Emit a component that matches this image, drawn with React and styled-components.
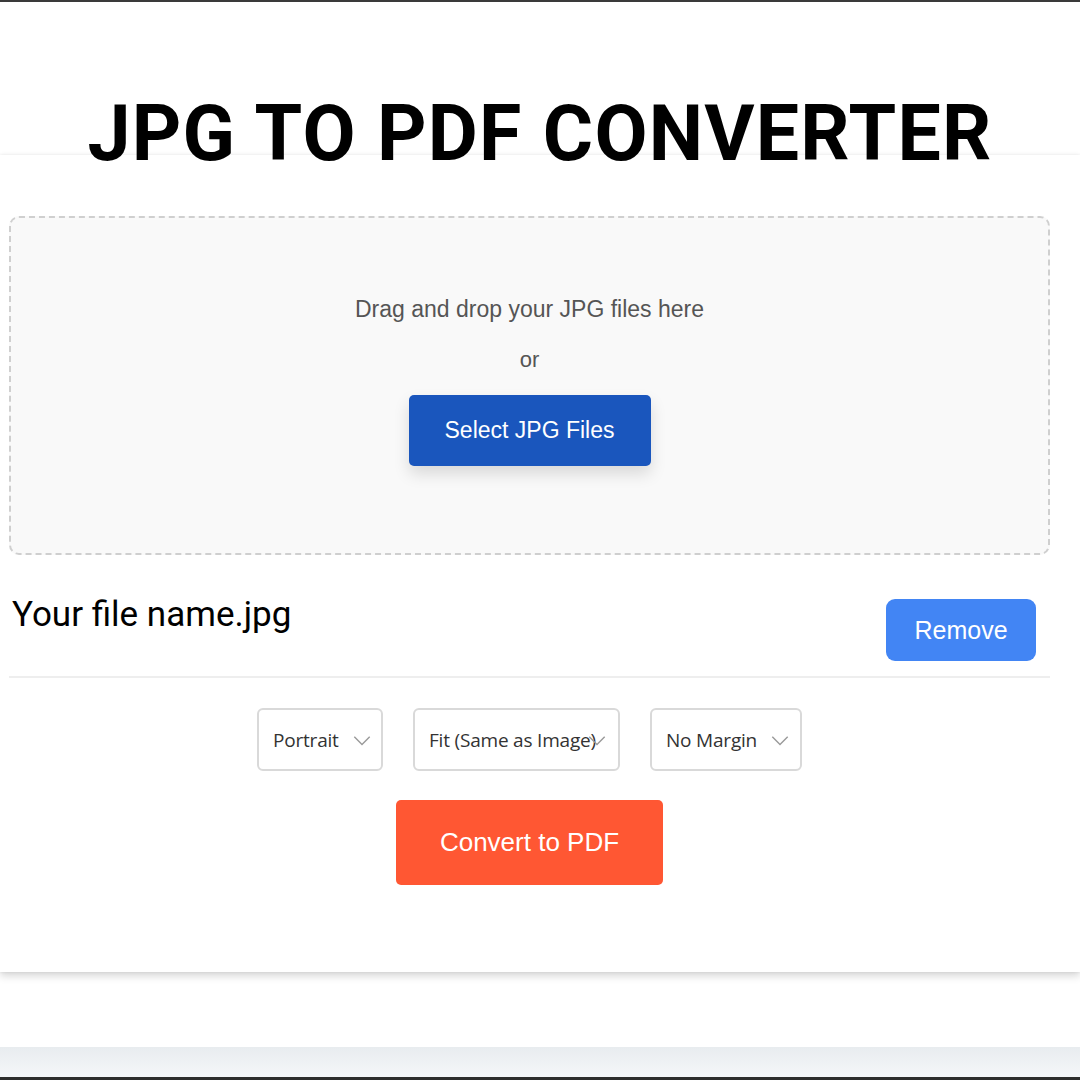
import React from 'react';
import styled, { createGlobalStyle } from 'styled-components';

const GlobalStyle = createGlobalStyle`
  html, body {
    margin: 0;
    padding: 0;
    background: #ffffff;
  }
  * {
    box-sizing: border-box;
  }
`;

const Page = styled.div`
  width: 1080px;
  height: 1080px;
  overflow: hidden;
  display: flex;
  flex-direction: column;
  border-top: 2px solid #3a3a3a;
  border-bottom: 3px solid #2e2e2e;
  background: #ffffff;
`;

const Title = styled.h1`
  position: relative;
  z-index: 1;
  margin: 95px 0 -17px;
  height: 75px;
  text-align: center;
  font-family: Roboto, "Liberation Sans", sans-serif;
  font-weight: 700;
  font-size: 77px;
  line-height: 75px;
  color: #000;
  letter-spacing: 1.2px;
`;

const Card = styled.div`
  position: relative;
  background: #ffffff;
  padding: 61px 30px 0 9px;
  height: 817px;
  box-shadow: 0 0 3px rgba(0, 0, 0, 0.08), 0 4px 8px rgba(0, 0, 0, 0.16);
`;

const DropZone = styled.div`
  height: 339px;
  border: 2px dashed #cfcfcf;
  border-radius: 10px;
  background: #f9f9f9;
  display: flex;
  flex-direction: column;
  align-items: center;
  padding-top: 77px;
  font-family: "Liberation Sans", Arial, sans-serif;
  color: #555;
`;

const DropText = styled.p`
  margin: 0;
  font-size: 23px;
  line-height: 28px;
`;

const OrText = styled.p`
  margin: 23px 0 0;
  font-size: 22px;
  line-height: 28px;
`;

const SelectButton = styled.button`
  margin-top: 21px;
  width: 242px;
  height: 71px;
  border: none;
  border-radius: 5px;
  background: #1a56bd;
  color: #fff;
  font-family: "Liberation Sans", Arial, sans-serif;
  font-size: 23px;
  box-shadow: 0 8px 16px rgba(0, 0, 0, 0.13);
`;

const FileRow = styled.div`
  display: flex;
  justify-content: space-between;
  align-items: flex-start;
  padding: 36px 14px 15px 3px;
  border-bottom: 2px solid #eeeeee;
`;

const FileName = styled.span`
  font-family: Roboto, "Liberation Sans", sans-serif;
  font-size: 35px;
  line-height: 40px;
  color: #000;
  margin-top: 4px;
`;

const RemoveButton = styled.button`
  margin-top: 8px;
  width: 150px;
  height: 62px;
  border: none;
  border-radius: 9px;
  background: #4285f4;
  color: #fff;
  font-family: "Liberation Sans", Arial, sans-serif;
  font-size: 25px;
`;

const Options = styled.div`
  display: flex;
  justify-content: center;
  gap: 30px;
  padding-top: 30px;
`;

const Select = styled.div`
  width: ${p => p.$w}px;
  height: 63px;
  border: 2px solid #d9d9d9;
  border-radius: 6px;
  background: #fff;
  display: flex;
  align-items: center;
  padding-left: 14px;
  padding-right: 6px;
  overflow: hidden;
  font-family: "Open Sans", "Noto Sans", sans-serif;
  font-size: 19px;
  letter-spacing: -0.2px;
  color: #333;
  white-space: nowrap;
`;

const SelectLabel = styled.span`
  flex: ${p => (p.$clip ? '0 0 auto' : '0 1 auto')};
  margin-right: ${p => (p.$clip ? '-10px' : '12px')};
`;

const Chevron = styled.svg`
  flex: none;
  width: 22px;
  height: 22px;
  color: #9a9a9a;
`;

const ConvertRow = styled.div`
  display: flex;
  justify-content: center;
  padding-top: 29px;
`;

const ConvertButton = styled.button`
  width: 267px;
  height: 85px;
  border: none;
  border-radius: 5px;
  background: #ff5733;
  color: #fff;
  font-family: "Liberation Sans", Arial, sans-serif;
  font-size: 26px;
`;

const Gap = styled.div`
  flex: 1;
`;

const BottomBand = styled.div`
  height: 30px;
  background: linear-gradient(#e8ecef, #f5f7f9);
`;

const ChevronIcon = () => (
  <Chevron viewBox="0 0 20 20" fill="none" stroke="currentColor" strokeWidth="1.3">
    <path d="M3 7l7 7 7-7" />
  </Chevron>
);

const selects = [
  { label: 'Portrait', w: 126 },
  { label: 'Fit (Same as Image)', w: 207, clip: true },
  { label: 'No Margin', w: 152 },
];

export default function App() {
  return (
    <>
      <GlobalStyle />
      <Page>
        <Title>JPG TO PDF CONVERTER</Title>
        <Card>
          <DropZone>
            <DropText>Drag and drop your JPG files here</DropText>
            <OrText>or</OrText>
            <SelectButton>Select JPG Files</SelectButton>
          </DropZone>
          <FileRow>
            <FileName>Your file name.jpg</FileName>
            <RemoveButton>Remove</RemoveButton>
          </FileRow>
          <Options>
            {selects.map(s => (
              <Select key={s.label} $w={s.w}>
                <SelectLabel $clip={s.clip}>{s.label}</SelectLabel>
                <ChevronIcon />
              </Select>
            ))}
          </Options>
          <ConvertRow>
            <ConvertButton>Convert to PDF</ConvertButton>
          </ConvertRow>
        </Card>
        <Gap />
        <BottomBand />
      </Page>
    </>
  );
}
